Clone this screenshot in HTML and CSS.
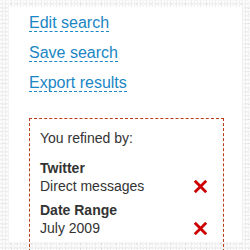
FILE: index.html
```html
<!DOCTYPE html>
<html>
<head>
<meta charset="utf-8">
<link rel="stylesheet" href="styles.css">
</head>
<body>
<div class="panel">
  <ul class="actions">
    <li><a class="action" href="#">Edit search</a></li>
    <li><a class="action" href="#">Save search</a></li>
    <li><a class="action" href="#">Export results</a></li>
  </ul>
  <div class="refine">
    <p class="refine-title">You refined by:</p>
    <div class="facet">
      <div class="facet-name">Twitter</div>
      <div class="facet-row">
        <span class="facet-value">Direct messages</span>
        <a class="remove" href="#" aria-label="Remove"><svg width="13" height="13" viewBox="0 0 13 13"><path d="M1.8 1.8 L11.2 11.2 M11.2 1.8 L1.8 11.2" stroke="#cc0000" stroke-width="2.8" stroke-linecap="square"/></svg></a>
      </div>
    </div>
    <div class="facet">
      <div class="facet-name">Date Range</div>
      <div class="facet-row">
        <span class="facet-value">July 2009</span>
        <a class="remove" href="#" aria-label="Remove"><svg width="13" height="13" viewBox="0 0 13 13"><path d="M1.8 1.8 L11.2 11.2 M11.2 1.8 L1.8 11.2" stroke="#cc0000" stroke-width="2.8" stroke-linecap="square"/></svg></a>
      </div>
    </div>
  </div>
</div>
</body>
</html>
```

FILE: styles.css
```css
html, body {
  margin: 0;
  padding: 0;
  height: 100%;
  overflow: hidden;
}
body {
  font-family: "Liberation Sans", Arial, sans-serif;
  background-color: #eeeeee;
  background-image:
    radial-gradient(circle at 30% 40%, #ffffff 0.9px, transparent 1.4px),
    radial-gradient(circle at 70% 20%, #f8f8f8 0.8px, transparent 1.3px),
    radial-gradient(circle at 50% 80%, #e0e0e0 0.7px, transparent 1.2px);
  background-size: 3px 4px, 5px 3px, 7px 5px;
}
.panel {
  margin: 7px 8px 0 9px;
  height: 235px;
  background: #ffffff;
  padding: 6px 0 0 20px;
  box-sizing: border-box;
}
.actions {
  list-style: none;
  margin: 0;
  padding: 0;
}
.actions li {
  font-size: 16px;
  line-height: 20px;
  margin-bottom: 10px;
}
.actions li:last-child {
  margin-bottom: 0;
}
.action {
  color: #1a86c4;
  text-decoration: none;
  border-bottom: 1px dashed #1a86c4;
}
.refine {
  margin: 25px 18px 0 0;
  border: 1px dashed #b83a17;
  padding: 10px 16px 14px 10px;
  color: #333333;
  font-size: 14px;
  line-height: 18px;
}
.refine-title {
  margin: 0 0 12px 0;
}
.facet {
  margin-bottom: 6px;
}
.facet:last-child {
  margin-bottom: 0;
}
.facet-name {
  font-weight: bold;
}
.facet-row {
  display: flex;
  justify-content: space-between;
  align-items: center;
}
.remove {
  display: flex;
  width: 13px;
  height: 13px;
}
```
